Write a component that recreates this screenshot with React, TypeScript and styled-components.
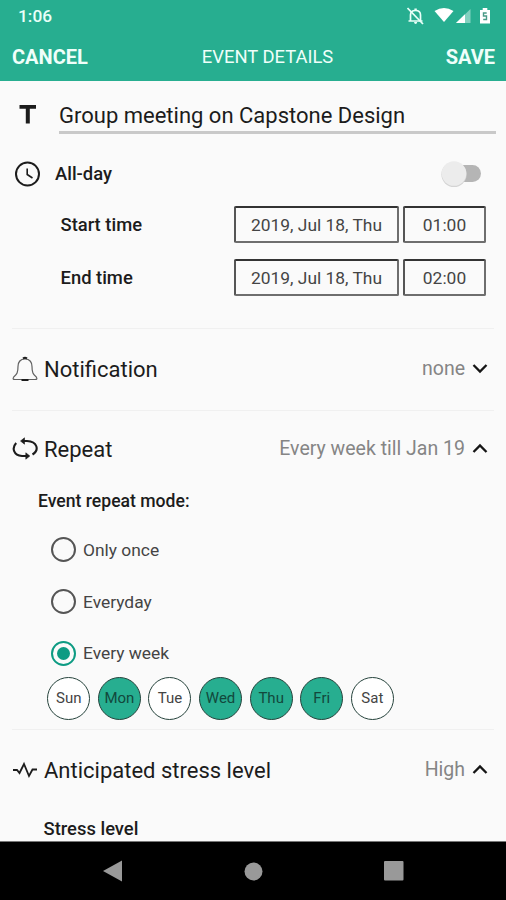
import React from "react";
import styled, { createGlobalStyle } from "styled-components";

const GREEN = "#27ae90";

const GlobalStyle = createGlobalStyle`
  *, *::before, *::after { box-sizing: border-box; }
  body { margin: 0; background: #fafafa; }
`;

const Screen = styled.div`
  width: 506px;
  height: 900px;
  overflow: hidden;
  display: flex;
  flex-direction: column;
  background: #fafafa;
  color: #1c1c1c;
  font-family: Roboto, sans-serif;
  white-space: nowrap;
`;

const Text = styled.span<{ $size: number; $weight?: number; $color?: string }>`
  font-size: ${(p) => p.$size}px;
  font-weight: ${(p) => p.$weight ?? 400};
  color: ${(p) => p.$color ?? "inherit"};
  line-height: 1.2;
`;

const StatusBar = styled.header`
  flex: none;
  height: 32px;
  padding: 0 15px 0 18px;
  display: flex;
  align-items: center;
  justify-content: space-between;
  background: ${GREEN};
  color: #e9fff8;
`;

const StatusIcons = styled.svg`
  display: block;
`;

const ActionBar = styled.nav`
  flex: none;
  height: 49px;
  padding: 0 11px 0 12px;
  display: grid;
  grid-template-columns: 100px 1fr 72px;
  align-items: center;
  background: ${GREEN};
  color: #effffa;
`;

const ActionSlot = styled.div<{ $align: string }>`
  text-align: ${(p) => p.$align};
`;

const ScreenTitle = styled(ActionSlot)`
  padding-top: 1px;
`;

const Body = styled.main`
  flex: 1;
  min-height: 0;
  overflow: hidden;
`;

const TitleRow = styled.div`
  display: flex;
  align-items: flex-end;
  height: 53px;
  padding: 0 10px 0 18px;
`;

const TitleIcon = styled.svg`
  margin-bottom: 10px;
`;

const TitleField = styled.div`
  flex: 1;
  height: 53px;
  margin-left: 22px;
  padding-top: 22px;
  border-bottom: 3px solid #c9c9c9;
`;

const AllDayRow = styled.div`
  display: flex;
  align-items: center;
  height: 48px;
  margin-top: 16px;
  padding: 0 25px 0 14px;
  gap: 14px;
`;

const Toggle = styled.div`
  margin-left: auto;
  width: 40px;
  height: 26px;
  display: flex;
  align-items: center;
  justify-content: flex-end;
`;

const TimeRow = styled.div`
  display: flex;
  align-items: center;
  height: 53px;
  padding: 0 20px 0 60.5px;
`;

const TimeLabel = styled(Text)`
  padding-top: 2px;
`;

const TimeBoxes = styled.div`
  margin-left: auto;
  display: flex;
  gap: 4px;
`;

const TimeBox = styled.div<{ $width: number }>`
  width: ${(p) => p.$width}px;
  height: 37px;
  padding-top: 2px;
  display: flex;
  align-items: center;
  justify-content: center;
  border: 2px solid #6e6e6e;
  border-top-color: #333;
  border-left-color: #555;
  border-radius: 2px;
`;

const Divider = styled.hr<{ $top?: number }>`
  height: 1px;
  margin: ${(p) => p.$top ?? 0}px 12px 0;
  border: 0;
  background: #f0f0f0;
`;

const SectionRow = styled.div<{ $height: number }>`
  display: flex;
  align-items: center;
  height: ${(p) => p.$height}px;
  padding: 0 18px 0 12px;
`;

const SectionIcon = styled.svg`
  flex: none;
  margin-right: 6px;
`;

const SectionLabel = styled(Text)`
  padding-top: 2px;
`;

const SectionValue = styled.div`
  margin-left: auto;
  display: flex;
  align-items: center;
  gap: 7px;
  padding-bottom: 1px;
  color: #858585;
`;

const SubHeading = styled.div<{ $height: number; $left: number; $top: number }>`
  height: ${(p) => p.$height}px;
  padding: ${(p) => p.$top}px 0 0 ${(p) => p.$left}px;
`;

const RadioRow = styled.div`
  display: flex;
  align-items: center;
  gap: 7px;
  height: 51.7px;
  padding-left: 51px;
`;

const RadioLabel = styled(Text)`
  padding-top: 1px;
`;

const RadioRing = styled.span<{ $on: boolean }>`
  width: 25px;
  height: 25px;
  border-radius: 50%;
  border: 2px solid ${(p) => (p.$on ? "#0d9b83" : "#555")};
  display: flex;
  align-items: center;
  justify-content: center;
  &::after {
    content: "";
    width: 13px;
    height: 13px;
    border-radius: 50%;
    background: ${(p) => (p.$on ? "#0d9b83" : "transparent")};
  }
`;

const DayRow = styled.div`
  display: flex;
  gap: 7.6px;
  margin-top: -2.5px;
  padding-left: 47.3px;
`;

const Day = styled.div<{ $on: boolean }>`
  width: 43px;
  height: 43px;
  border-radius: 50%;
  border: 1.3px solid #26433c;
  background: ${(p) => (p.$on ? GREEN : "#fff")};
  color: ${(p) => (p.$on ? "#12483c" : "#444")};
  display: flex;
  align-items: center;
  justify-content: center;
`;

const NavBar = styled.footer`
  flex: none;
  height: 59px;
  padding: 0 102px 0 102px;
  border-top: 1px solid #777;
  display: flex;
  align-items: center;
  justify-content: space-between;
  background: #000;
`;

const Chevron = ({ up }: { up?: boolean }) => (
  <svg width="16" height="12" viewBox="0 0 16 12" fill="none" stroke="#151515" strokeWidth="2.3">
    <path d={up ? "M1.5 9 8 2.500l6.500 6.500" : "M1.500 2 8 8.500 14.500 2"} />
  </svg>
);

const radios = [
  { label: "Only once", on: false },
  { label: "Everyday", on: false },
  { label: "Every week", on: true },
];

const days = [
  { label: "Sun", on: false },
  { label: "Mon", on: true },
  { label: "Tue", on: false },
  { label: "Wed", on: true },
  { label: "Thu", on: true },
  { label: "Fri", on: true },
  { label: "Sat", on: false },
];

const times = [
  { label: "Start time", date: "2019, Jul 18, Thu", time: "01:00" },
  { label: "End time", date: "2019, Jul 18, Thu", time: "02:00" },
];

export default function App() {
  return (
    <Screen>
      <GlobalStyle />
      <StatusBar>
        <Text $size={17.3} $weight={500}>1:06</Text>
        <StatusIcons width="84" height="18" viewBox="0 0 84 18">
          <g fill="none" stroke="#e9fff8" strokeWidth="1.7">
            <path d="M3.500 13.500V8q0-4.500 5-4.500t5 4.500v5.500M1.500 14h14" />
            <path d="M.5 1 16 17" />
          </g>
          <path d="M7 15h3.200q-.2 2-1.600 2T7 15M7.400 1.500h2.400V4H7.400z" fill="#e9fff8" />
          <path d="M27.500 4Q37 -2 46.500 4L37 15z" fill="#fff" />
          <path d="M49 16 63.500 2v14z" fill="#82d1bf" />
          <path d="M49 16l9-8.700V16z" fill="#fff" />
          <path d="M73 3h2.700V1h4.600v2H83v13.500H73z" fill="#fff" />
          <path d="M79.700 6h-3.200v3h3v3.500h-3.300" fill="none" stroke="#4a9986" strokeWidth="1.400" />
        </StatusIcons>
      </StatusBar>
      <ActionBar>
        <ActionSlot $align="left"><Text $size={20} $weight={700}>CANCEL</Text></ActionSlot>
        <ScreenTitle $align="center"><Text $size={18.4}>EVENT DETAILS</Text></ScreenTitle>
        <ActionSlot $align="right"><Text $size={20} $weight={700}>SAVE</Text></ActionSlot>
      </ActionBar>
      <Body>
        <TitleRow>
          <TitleIcon width="19" height="19" viewBox="0 0 19 19">
            <path d="M1.500 0h16.500v3.700h-6.200V18.500H7.800V3.700H1.500z" fill="#1c1c1c" />
          </TitleIcon>
          <TitleField>
            <Text $size={22}>Group meeting on Capstone Design</Text>
          </TitleField>
        </TitleRow>
        <AllDayRow>
          <svg width="27" height="27" viewBox="0 0 27 27" fill="none" stroke="#1c1c1c">
            <circle cx="13.500" cy="13" r="11.500" strokeWidth="2" />
            <path d="M13.200 7.500v6l5.300 3.500" strokeWidth="1.600" />
          </svg>
          <Text $size={18.4} $weight={500}>All-day</Text>
          <Toggle>
            <svg width="40" height="28" viewBox="0 0 40 28">
              <rect x="9" y="5" width="31" height="17" rx="8.500" fill="#b5b5b5" />
              <circle cx="13" cy="14.500" r="12.600" fill="#d4d4d4" />
              <circle cx="13" cy="13.500" r="12.300" fill="#ececec" />
            </svg>
          </Toggle>
        </AllDayRow>
        {times.map((t) => (
          <TimeRow key={t.label}>
            <TimeLabel $size={18.4} $weight={500}>{t.label}</TimeLabel>
            <TimeBoxes>
              <TimeBox $width={165}><Text $size={17.4} $color="#444">{t.date}</Text></TimeBox>
              <TimeBox $width={83}><Text $size={17.4} $color="#444">{t.time}</Text></TimeBox>
            </TimeBoxes>
          </TimeRow>
        ))}
        <Divider $top={24} />
        <SectionRow $height={81}>
          <SectionIcon width="26" height="28" viewBox="0 0 26 28" fill="none" stroke="#606060" strokeWidth="1.200">
            <path d="M13 3C8 3 6 6.500 6 10.500c0 6-1 8-4.300 10.500q-1.700 2.500 1.300 2.500h20q3 0 1.300-2.500C21 18.500 20 16.500 20 10.500c0-4-2-7.500-7-7.500z" />
            <path d="M11 2.500Q13 1 15 2.500M9.500 24h7" stroke="#1c1c1c" strokeWidth="2" />
          </SectionIcon>
          <SectionLabel $size={22}>Notification</SectionLabel>
          <SectionValue><Text $size={19.5}>none</Text><Chevron /></SectionValue>
        </SectionRow>
        <Divider />
        <SectionRow $height={77}>
          <SectionIcon width="26" height="26" viewBox="0 0 26 26" fill="none" stroke="#1c1c1c" strokeWidth="2.100">
            <path d="M4.200 6C-.5 11 1.500 18.500 10 19h6.500M20.500 17.500C27.500 13 25.500 4.500 15 4H10" />
            <path d="m12.500.8-4 3.200 4 3.200zM13.800 15.800l4 3.200-4 3.200z" fill="#1c1c1c" strokeWidth=".6" />
          </SectionIcon>
          <SectionLabel $size={22}>Repeat</SectionLabel>
          <SectionValue><Text $size={19.5}>Every week till Jan 19</Text><Chevron up /></SectionValue>
        </SectionRow>
        <SubHeading $height={36} $left={38} $top={3}>
          <Text $size={17.600} $weight={500}>Event repeat mode:</Text>
        </SubHeading>
        {radios.map((r) => (
          <RadioRow key={r.label}>
            <RadioRing $on={r.on} />
            <RadioLabel $size={17.4} $color="#444">{r.label}</RadioLabel>
          </RadioRow>
        ))}
        <DayRow>
          {days.map((d) => (
            <Day key={d.label} $on={d.on}><Text $size={15}>{d.label}</Text></Day>
          ))}
        </DayRow>
        <Divider $top={9} />
        <SectionRow $height={81}>
          <SectionIcon width="26" height="18" viewBox="0 0 26 18" fill="none" stroke="#1c1c1c" strokeWidth="1.800">
            <path d="M1 9h4l2.500 3L12 3l5 12 3.500-6.500H25" />
          </SectionIcon>
          <SectionLabel $size={22}>Anticipated stress level</SectionLabel>
          <SectionValue><Text $size={19.5}>High</Text><Chevron up /></SectionValue>
        </SectionRow>
        <SubHeading $height={34} $left={43.5} $top={7}>
          <Text $size={18.4} $weight={500}>Stress level</Text>
        </SubHeading>
      </Body>
      <NavBar>
        <svg width="20" height="22" viewBox="0 0 20 22"><path d="M1 11 20 .5v21z" fill="#999" /></svg>
        <svg width="19" height="19" viewBox="0 0 19 19"><circle cx="9.500" cy="9.500" r="9" fill="#999" /></svg>
        <svg width="20" height="20" viewBox="0 0 20 20"><rect width="19.500" height="19.500" rx="1" fill="#999" /></svg>
      </NavBar>
    </Screen>
  );
}
